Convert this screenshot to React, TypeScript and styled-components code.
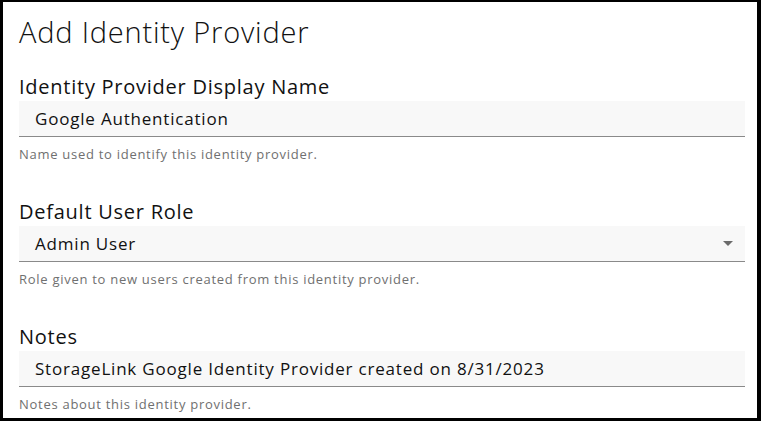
import React from "react";
import styled, { createGlobalStyle } from "styled-components";

const Global = createGlobalStyle`
  html, body { margin: 0; padding: 0; background: #fff; }
  * { box-sizing: border-box; }
`;

const Frame = styled.div`
  width: 761px;
  height: 421px;
  border-style: solid;
  border-color: #000;
  border-width: 2px 4px 3px 3px;
  background: #fff;
  overflow: hidden;
`;

const Content = styled.div`
  padding: 12px 12px 0 16px;
  display: flex;
  flex-direction: column;
`;

const Title = styled.h1`
  margin: 0;
  font-family: "Open Sans", sans-serif;
  font-weight: 300;
  font-size: 29px;
  line-height: 36px;
  letter-spacing: 0.8px;
  color: #111;
`;

const Field = styled.div<{ $first?: boolean }>`
  display: flex;
  flex-direction: column;
  margin-top: ${(p) => (p.$first ? "23px" : "36px")};
`;

const Label = styled.label`
  font-family: "Open Sans", sans-serif;
  font-size: 20px;
  line-height: 28px;
  letter-spacing: 0.75px;
  color: #111;
`;

const InputBox = styled.div`
  position: relative;
  height: 36px;
  background: #f8f8f8;
  border-bottom: 1px solid #8a8a8a;
  display: flex;
  align-items: center;
  padding-left: 16px;
  font-family: "Open Sans", sans-serif;
  font-size: 17px;
  letter-spacing: 0.8px;
  color: #111;
`;

const Arrow = styled.span`
  position: absolute;
  right: 12px;
  top: 15px;
  width: 0;
  height: 0;
  border-left: 5px solid transparent;
  border-right: 5px solid transparent;
  border-top: 5px solid #6b6b6b;
`;

const Help = styled.div`
  margin-top: 9px;
  font-family: "Open Sans", sans-serif;
  font-size: 13px;
  line-height: 16px;
  letter-spacing: 0.72px;
  color: #707070;
`;

export default function App() {
  return (
    <>
      <Global />
      <Frame>
        <Content>
          <Title>Add Identity Provider</Title>
          <Field $first>
            <Label>Identity Provider Display Name</Label>
            <InputBox>Google Authentication</InputBox>
            <Help>Name used to identify this identity provider.</Help>
          </Field>
          <Field>
            <Label>Default User Role</Label>
            <InputBox>
              Admin User
              <Arrow />
            </InputBox>
            <Help>Role given to new users created from this identity provider.</Help>
          </Field>
          <Field>
            <Label>Notes</Label>
            <InputBox>StorageLink Google Identity Provider created on 8/31/2023</InputBox>
            <Help>Notes about this identity provider.</Help>
          </Field>
        </Content>
      </Frame>
    </>
  );
}
